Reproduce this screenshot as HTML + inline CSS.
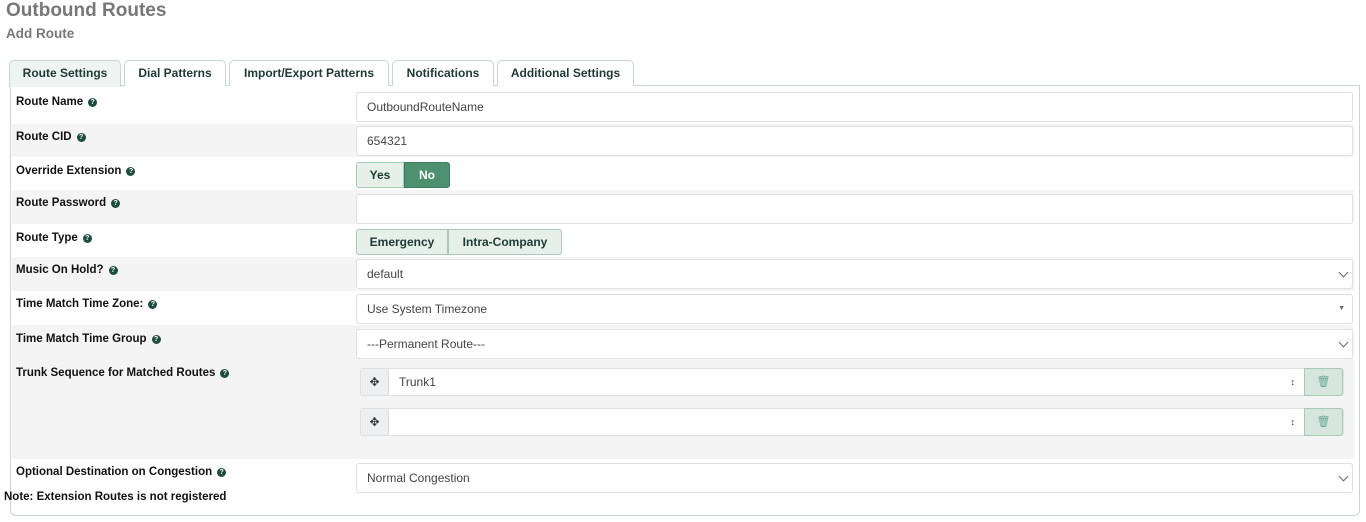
<!DOCTYPE html>
<html><head><meta charset="utf-8"><style>
*{box-sizing:border-box}
body{margin:0;width:1366px;height:522px;background:#fff;font-family:"Liberation Sans",sans-serif;position:relative;overflow:hidden;color:#222}
.h1{position:absolute;left:6px;top:0px;font-size:19px;font-weight:bold;color:#777}
.h2{position:absolute;left:6px;top:26px;font-size:13.5px;font-weight:bold;color:#777}
.tab{position:absolute;top:60px;height:26px;border:1px solid #c7d6cf;border-bottom:none;border-radius:5px 5px 0 0;font-size:12px;font-weight:bold;color:#1e3a33;text-align:center;line-height:25px;background:#fff}
.tab.act{background:#eef4f1;height:27px}
.panel{position:absolute;left:10px;top:85px;width:1350px;height:431px;border:1px solid #c7d6cf;border-radius:0 0 6px 6px}
.row{position:absolute;left:12px;width:1342px}
.g{background:#f4f4f4}
.lbl{position:absolute;left:16px;font-size:11.5px;font-weight:bold;color:#111}
.q{display:inline-block;width:9px;height:9px;border-radius:50%;background:#1e4d40;color:#fff;font-size:7px;text-align:center;line-height:9px;margin-left:5px;vertical-align:1px}
.inp{position:absolute;left:356px;width:997px;height:30px;border:1px solid #e0e0e0;border-radius:3px;background:#fff;font-size:12px;color:#444;padding-left:10px;line-height:28px}
.chev{position:absolute;right:5px;top:9px;width:7px;height:7px;border-right:1px solid #666;border-bottom:1px solid #666;transform:rotate(45deg)}
.btn{position:absolute;height:26px;border:1px solid #a8cbb8;font-size:12px;font-weight:bold;line-height:24px;text-align:center;background:#e6efea;color:#1e3a33}
.note{position:absolute;left:4px;top:491px;font-size:11.5px;font-weight:bold;color:#111}
</style></head><body>
<div class="h1">Outbound Routes</div>
<div class="h2">Add Route</div>
<div class="panel"></div>
<div class="tab act" style="left:9px;width:112px">Route Settings</div>
<div class="tab" style="left:124px;width:102px">Dial Patterns</div>
<div class="tab" style="left:229px;width:160px">Import/Export Patterns</div>
<div class="tab" style="left:392px;width:102px">Notifications</div>
<div class="tab" style="left:497px;width:137px">Additional Settings</div>

<div class="row g" style="top:124px;height:33px"></div>
<div class="row g" style="top:190px;height:34px"></div>
<div class="row g" style="top:257px;height:34px"></div>
<div class="row g" style="top:325px;height:134px"></div>

<div class="lbl" style="top:96px">Route Name<span class="q">?</span></div>
<div class="inp" style="top:92px">OutboundRouteName</div>
<div class="lbl" style="top:131px">Route CID<span class="q">?</span></div>
<div class="inp" style="top:126px">654321</div>
<div class="lbl" style="top:165px">Override Extension<span class="q">?</span></div>
<div class="btn" style="left:356px;top:162px;width:48px;border-radius:3px 0 0 3px">Yes</div>
<div class="btn" style="left:404px;top:162px;width:46px;border-radius:0 3px 3px 0;background:#4e9170;color:#fff;border-color:#3f7d5f">No</div>
<div class="lbl" style="top:197px">Route Password<span class="q">?</span></div>
<div class="inp" style="top:194px"></div>
<div class="lbl" style="top:232px">Route Type<span class="q">?</span></div>
<div class="btn" style="left:356px;top:229px;width:92px;border-radius:3px 0 0 3px">Emergency</div>
<div class="btn" style="left:448px;top:229px;width:114px;border-radius:0 3px 3px 0">Intra-Company</div>
<div class="lbl" style="top:264px">Music On Hold?<span class="q">?</span></div>
<div class="inp" style="top:259px">default<span class="chev"></span></div>
<div class="lbl" style="top:298px">Time Match Time Zone:<span class="q">?</span></div>
<div class="inp" style="top:294px">Use System Timezone<span style="position:absolute;right:7px;top:0;font-size:7px;color:#666">&#9660;</span></div>
<div class="lbl" style="top:333px">Time Match Time Group<span class="q">?</span></div>
<div class="inp" style="top:329px">---Permanent Route---<span class="chev"></span></div>
<div class="lbl" style="top:367px">Trunk Sequence for Matched Routes<span class="q">?</span></div>

<div class="inp" style="top:368px;left:360px;width:984px;height:28px;padding:0;line-height:26px">
 <div style="position:absolute;left:0;top:0;width:28px;height:26px;background:#eceef0;border-right:1px solid #ddd;text-align:center;font-size:12px;color:#333">&#10021;</div>
 <div style="position:absolute;left:38px">Trunk1</div>
 <div style="position:absolute;right:48px;font-size:9px;color:#333">&#8597;</div>
 <div style="position:absolute;right:0;top:-1px;width:39px;height:28px;background:#d6e5dd;border:1px solid #a8cbb8;border-radius:0 3px 3px 0;text-align:center;color:#6a9;font-size:11px">&#128465;</div>
</div>
<div class="inp" style="top:408px;left:360px;width:984px;height:28px;padding:0;line-height:26px">
 <div style="position:absolute;left:0;top:0;width:28px;height:26px;background:#eceef0;border-right:1px solid #ddd;text-align:center;font-size:12px;color:#333">&#10021;</div>
 <div style="position:absolute;right:48px;font-size:9px;color:#333">&#8597;</div>
 <div style="position:absolute;right:0;top:-1px;width:39px;height:28px;background:#d6e5dd;border:1px solid #a8cbb8;border-radius:0 3px 3px 0;text-align:center;color:#6a9;font-size:11px">&#128465;</div>
</div>

<div class="lbl" style="top:466px">Optional Destination on Congestion<span class="q">?</span></div>
<div class="inp" style="top:463px">Normal Congestion<span class="chev"></span></div>
<div class="note">Note: Extension Routes is not registered</div>
</body></html>
